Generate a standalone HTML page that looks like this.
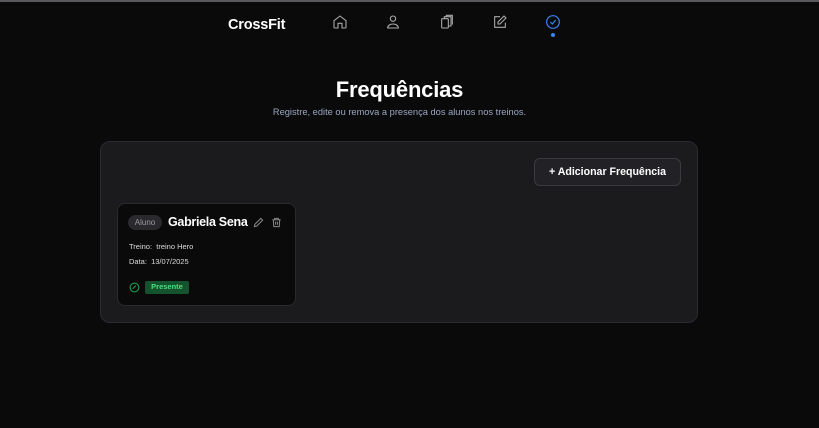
<!DOCTYPE html>
<html><head><meta charset="utf-8"><style>
*{box-sizing:border-box;margin:0;padding:0}
body{width:819px;height:428px;background:#0a0a0b;font-family:"Liberation Sans",sans-serif;color:#fff;position:relative;overflow:hidden}
.top{position:absolute;left:0;top:0;width:819px;height:2px;background:#5a5a5e}
.logo{position:absolute;left:228px;top:17px;font-size:14.5px;font-weight:bold;letter-spacing:-0.2px}
.ic{position:absolute;top:14px}
h1{position:absolute;left:0;width:799px;text-align:center;top:77px;font-size:22px;font-weight:bold;letter-spacing:-0.2px}
.sub{position:absolute;left:0;width:799px;text-align:center;top:107px;font-size:9.3px;color:#9aa6bf}
.panel{position:absolute;left:100px;top:141px;width:598px;height:182px;background:#1b1b1e;border:1px solid #2c2c30;border-radius:10px}
.btn{position:absolute;left:534px;top:158px;width:147px;height:28px;border:1px solid #3a3a3f;border-radius:6px;background:#222226;font-size:10.6px;font-weight:bold;text-align:center;line-height:27px}
.card{position:absolute;left:117px;top:203px;width:179px;height:103px;background:#0a0a0b;border:1px solid #2a2a2e;border-radius:8px}
.tag{position:absolute;left:128px;top:215px;width:34px;height:15px;border-radius:8px;background:#2a2a2e;color:#9a9aa0;font-size:8px;text-align:center;line-height:15px}
.name{position:absolute;left:168px;top:215px;font-size:12.5px;font-weight:bold;letter-spacing:-0.3px}
.info{position:absolute;left:129px;font-size:7.5px;color:#ddd}
.pres{position:absolute;left:145px;top:281px;width:44px;height:13px;background:#14532d;color:#4ade80;border-radius:2px;font-size:7.5px;font-weight:bold;text-align:center;line-height:12px}
</style></head><body>
<div class="top"></div>
<div class="logo">CrossFit</div>
<svg class="ic" style="left:332px" width="16" height="16" viewBox="0 0 24 24" fill="none" stroke="#aaa" stroke-width="1.6"><path d="M3 10l9-7 9 7v10a1 1 0 0 1-1 1h-5v-7H9v7H4a1 1 0 0 1-1-1z"/></svg>
<svg class="ic" style="left:385px" width="16" height="16" viewBox="0 0 24 24" fill="none" stroke="#aaa" stroke-width="1.6"><circle cx="12" cy="7" r="4"/><path d="M4 21c0-4 4-6 8-6s8 2 8 6z"/></svg>
<svg class="ic" style="left:439px" width="16" height="16" viewBox="0 0 24 24" fill="none" stroke="#aaa" stroke-width="1.6"><rect x="4" y="7" width="10" height="14" rx="1"/><path d="M8 7V4h10v14h-4"/><path d="M11 4V2h9v14"/></svg>
<svg class="ic" style="left:492px" width="16" height="16" viewBox="0 0 24 24" fill="none" stroke="#aaa" stroke-width="1.6"><path d="M20 13v7H4V4h8"/><path d="M18 3l3 3-9 9H9v-3z"/></svg>
<svg class="ic" style="left:545px" width="16" height="16" viewBox="0 0 24 24" fill="none" stroke="#3b82f6" stroke-width="1.8"><circle cx="12" cy="12" r="9.5"/><path d="M8 12l3 3 5-6"/></svg>
<div style="position:absolute;left:551px;top:33px;width:4px;height:4px;border-radius:2px;background:#3b82f6"></div>
<h1>Frequências</h1>
<div class="sub">Registre, edite ou remova a presença dos alunos nos treinos.</div>
<div class="panel"></div>
<div class="btn">+ Adicionar Frequência</div>
<div class="card"></div>
<div class="tag">Aluno</div>
<div class="name">Gabriela Sena</div>
<svg style="position:absolute;left:253px;top:217px" width="11" height="11" viewBox="0 0 24 24" fill="none" stroke="#888" stroke-width="2.2"><path d="M3 21l1-5L17 3l4 4L8 20z"/></svg>
<svg style="position:absolute;left:271px;top:217px" width="11" height="11" viewBox="0 0 24 24" fill="none" stroke="#888" stroke-width="2.2"><path d="M3 6h18M8 6V3h8v3M5 6l1 15h12l1-15M10 10v7M14 10v7"/></svg>
<div class="info" style="top:242px">Treino:&nbsp; treino Hero</div>
<div class="info" style="top:257px">Data:&nbsp; 13/07/2025</div>
<svg style="position:absolute;left:129px;top:282px" width="11" height="11" viewBox="0 0 24 24" fill="none" stroke="#16a34a" stroke-width="2.4"><circle cx="12" cy="12" r="9.5"/><path d="M8 15l7-7"/></svg>
<div class="pres">Presente</div>
</body></html>
